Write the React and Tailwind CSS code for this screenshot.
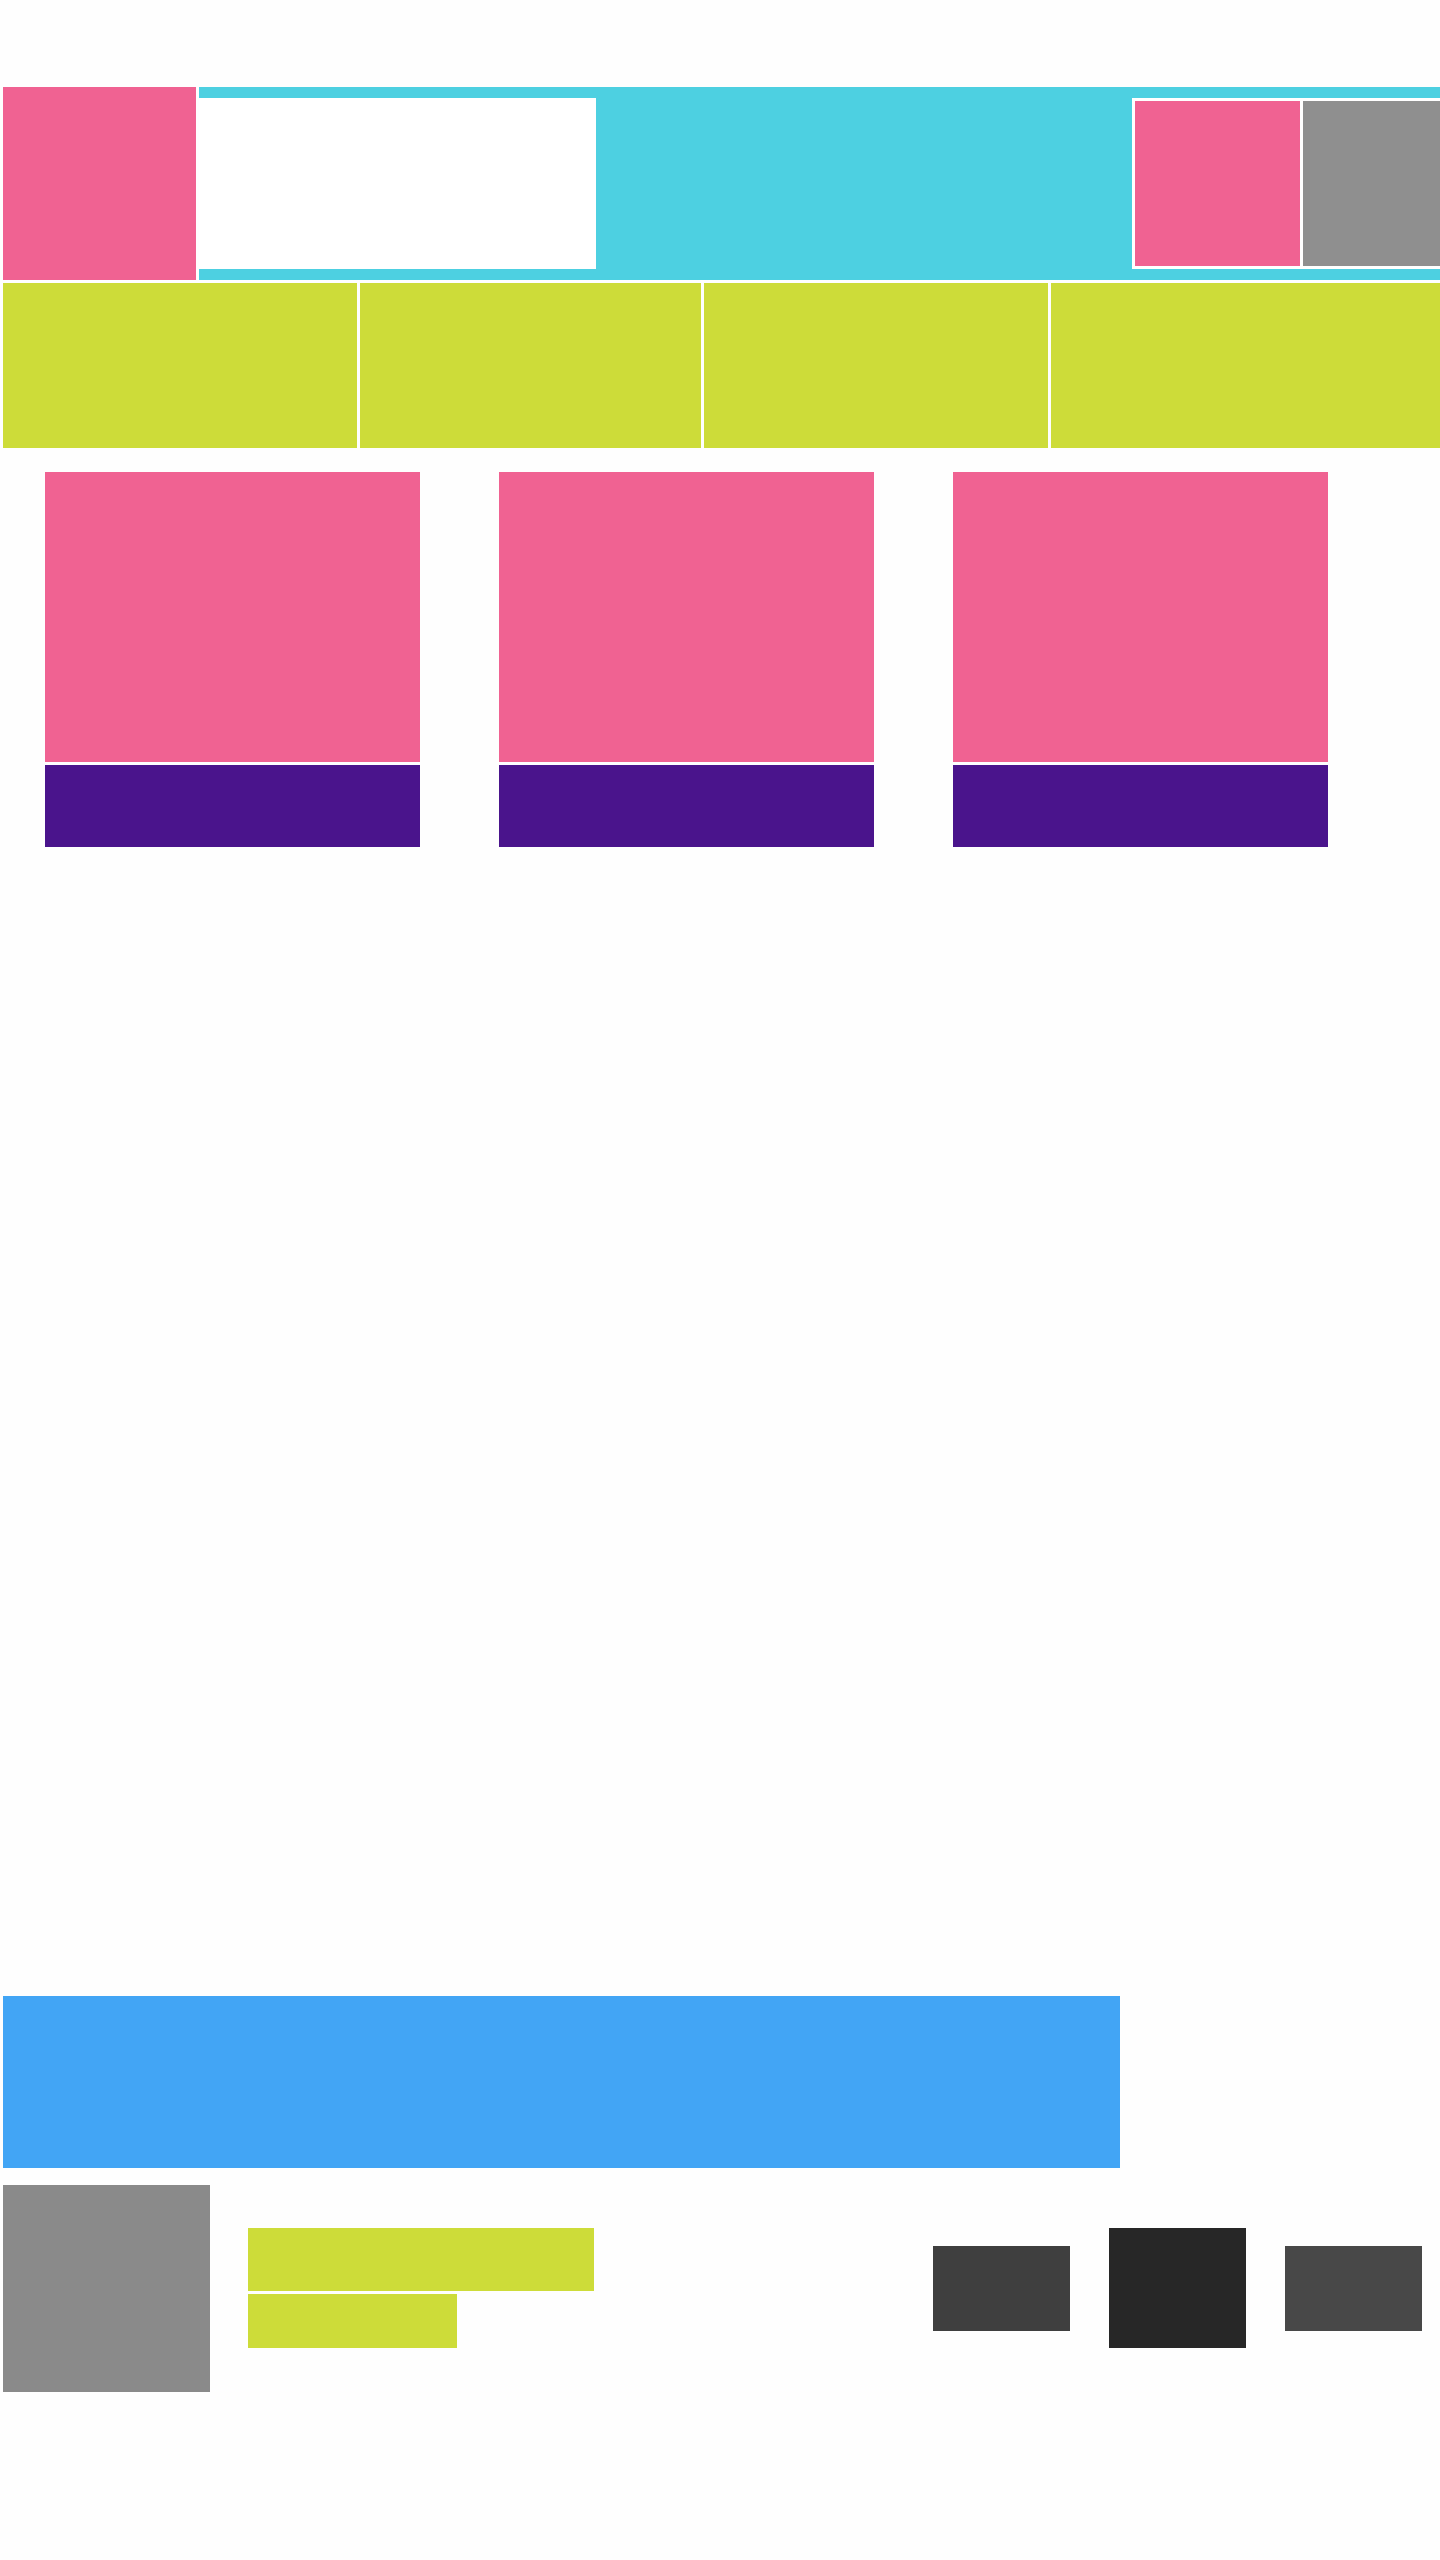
export default function App() {
  const cells = ['w-[354px]', 'w-[341px]', 'w-[344px]', 'flex-1'];

  return (
    <div className="min-h-[2560px] w-[1440px] overflow-hidden bg-[#fefefe] pt-[87px] pl-[3px]">
      {/* Header */}
      <div className="flex h-[193px] gap-[3px]">
        <div className="w-[193px] bg-[#f06292]" />
        <div className="flex flex-1 items-center justify-between bg-[#4dd0e1]">
          <div className="h-[171px] w-[397px] bg-white" />
          <div className="flex h-[171px] w-[308px] gap-[3px] bg-white p-[3px] pr-0">
            <div className="w-[165px] bg-[#f06292]" />
            <div className="flex-1 bg-[#8f8f8f]" />
          </div>
        </div>
      </div>

      {/* Nav strip */}
      <div className="mt-[3px] flex h-[165px] gap-[3px]">
        {cells.map((w, i) => (
          <div key={i} className={`${w} bg-[#cddc39]`} />
        ))}
      </div>

      {/* Cards */}
      <div className="mt-[24px] flex gap-[79px] pl-[42px]">
        {[0, 1, 2].map((i) => (
          <div key={i} className="flex w-[375px] flex-col gap-[3px]">
            <div className="h-[290px] bg-[#f06292]" />
            <div className="h-[82px] bg-[#4a148c]" />
          </div>
        ))}
      </div>

      {/* Banner */}
      <div className="mt-[1149px] h-[172px] w-[1117px] bg-[#42a5f5]" />

      {/* Footer row */}
      <div className="mt-[17px] flex items-start pr-[18px]">
        <div className="h-[207px] w-[207px] bg-[#8a8a8a]" />
        <div className="ml-[38px] mt-[43px] flex flex-col gap-[3px]">
          <div className="h-[63px] w-[346px] bg-[#cddc39]" />
          <div className="h-[54px] w-[209px] bg-[#cddc39]" />
        </div>
        <div className="flex-1" />
        <div className="mt-[43px] flex items-center gap-[39px]">
          <div className="h-[85px] w-[137px] bg-[#3f3f3f]" />
          <div className="h-[120px] w-[137px] bg-[#272727]" />
          <div className="h-[85px] w-[137px] bg-[#484848]" />
        </div>
      </div>
    </div>
  );
}
